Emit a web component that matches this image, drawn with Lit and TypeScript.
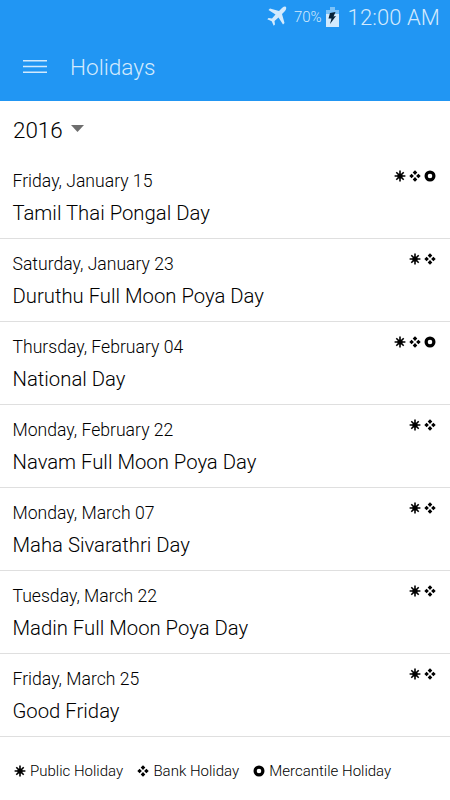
import { LitElement, html, css } from "lit";
import { customElement } from "lit/decorators.js";

const rows: [string, string, boolean][] = [
  ["Friday, January 15", "Tamil Thai Pongal Day", true],
  ["Saturday, January 23", "Duruthu Full Moon Poya Day", false],
  ["Thursday, February 04", "National Day", true],
  ["Monday, February 22", "Navam Full Moon Poya Day", false],
  ["Monday, March 07", "Maha Sivarathri Day", false],
  ["Tuesday, March 22", "Madin Full Moon Poya Day", false],
  ["Friday, March 25", "Good Friday", false],
];

const star = html`<svg class="mark" viewBox="0 0 12 12"><path d="M6 .6V11.4M.6 6H11.4M2.300 2.300L9.700 9.700M9.700 2.300L2.300 9.700" stroke="#000" stroke-width="1.600"/><circle cx="6" cy="6" r="2.600"/></svg>`;
const diamonds = html`<svg class="mark" viewBox="0 0 12 12"><path d="M6 .3L8.300 2.600L6 4.900L3.700 2.600ZM6 7.100L8.300 9.400L6 11.700L3.700 9.400ZM2.600 3.700L4.900 6L2.600 8.300L.3 6ZM9.400 3.700L11.700 6L9.400 8.300L7.100 6Z"/></svg>`;
const ring = html`<svg class="mark" viewBox="0 0 12 12"><circle cx="6" cy="6" r="3.900" fill="none" stroke="#000" stroke-width="3.200"/></svg>`;

@customElement("app-root")
export class AppRoot extends LitElement {
  static styles = css`
    :host { display: flex; flex-direction: column; width: 450px; height: 800px; background: #fff; color: #000; font-family: Roboto, sans-serif; font-weight: 280; overflow: hidden; }
    * { box-sizing: border-box; }
    header { background: #2196f3; color: #d3eafd; height: 101px; flex: none; }
    .status { height: 34px; display: flex; align-items: center; justify-content: flex-end; padding-right: 10px; font-weight: 300; }
    .status svg { flex: none; }
    .plane { margin-top: -2px; }
    .pct { font-size: 15px; margin: 0 4px 0 7px; }
    .clock { font-size: 22px; margin-left: 9px; letter-spacing: .1px; }
    .bar { height: 67px; display: flex; align-items: center; padding-left: 23px; font-size: 22.600px; font-weight: 300; }
    .bar svg { margin: -3px 23px 0 0; }
    .year { height: 55px; display: flex; align-items: center; padding: 4px 13px 0; font-size: 22.400px; }
    .caret { margin: -3px 0 0 8px; }
    .row { height: 83px; border-bottom: 1px solid #dfdfdf; padding: 13px 14px 0 12.500px; display: flex; justify-content: space-between; }
    .date { font-size: 17.600px; line-height: 24px; }
    .name { font-size: 20.300px; line-height: 28px; margin-top: 6px; }
    .marks { display: flex; gap: 3px; height: 12px; margin-top: 1px; }
    .mark { width: 12px; height: 12px; flex: none; }
    .legend { display: flex; align-items: center; padding: 5px 14px 0; font-size: 15px; height: 64px; }
    .item { display: flex; align-items: center; gap: 4px; margin-right: 14.300px; }
  `;
  render() {
    return html`
      <header>
        <div class="status">
          <svg class="plane" width="20" height="20" viewBox="0 0 20 20" fill="currentColor"><path d="M18.800 .8Q17.500 0 15 2L12 5L3 2.500L1.500 4L8.500 8.500L5 12.500L1.500 12L.3 13.300L4.700 15.300L6.700 19.700L8 18.500L7.500 15L11.500 11.500L16 18.500L17.500 17L15 8L18 5Q20 2.300 18.800 .8Z"/></svg>
          <span class="pct">70%</span>
          <svg width="13" height="20" viewBox="0 0 13 20"><path fill="#7cc2f8" d="M4 0H9V3H13V7H0V3H4Z"/><path fill="currentColor" d="M0 7H13V20H0Z"/><path fill="#062238" d="M4 6L9.500 5L7.500 9.500L10 9L4 17L5.500 11.500H2.500Z"/></svg>
          <span class="clock">12:00 AM</span>
        </div>
        <div class="bar"><svg width="24" height="13" viewBox="0 0 24 13"><path d="M0 .7H24M0 6.500H24M0 12.300H24" stroke="currentColor" stroke-width="1.400"/></svg>Holidays</div>
      </header>
      <div class="year">2016<svg class="caret" width="13" height="7"><path d="M0 0H13L6.500 7Z" fill="#6e6e6e"/></svg></div>
      <main>${rows.map(([d, n, m]) => html`<div class="row"><div><div class="date">${d}</div><div class="name">${n}</div></div><div class="marks">${star}${diamonds}${m ? ring : ""}</div></div>`)}</main>
      <div class="legend"><span class="item">${star}Public Holiday</span><span class="item">${diamonds}Bank Holiday</span><span class="item">${ring}Mercantile Holiday</span></div>`;
  }
}
